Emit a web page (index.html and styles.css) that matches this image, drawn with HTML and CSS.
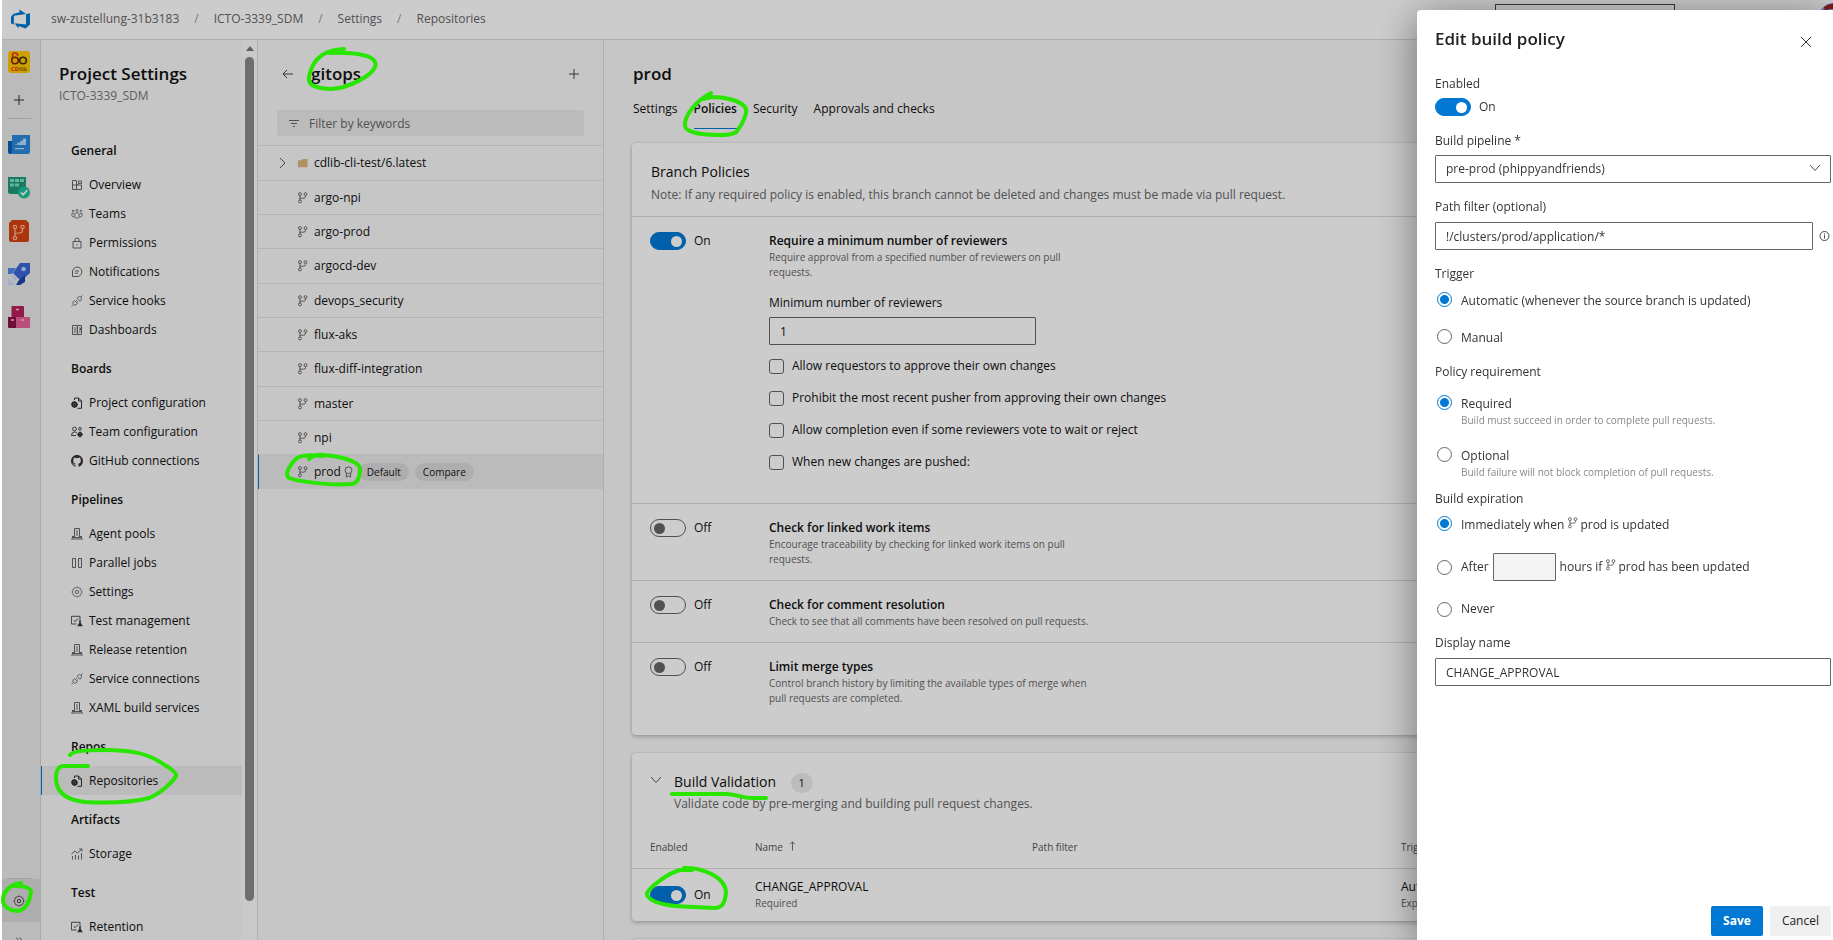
FILE: index.html
```html
<!DOCTYPE html>
<html lang="en">
<head>
<meta charset="utf-8">
<title>Repositories - Settings</title>
<link rel="stylesheet" href="styles.css">
</head>
<body>
<svg class="sprite" aria-hidden="true">
  <symbol id="i-branch" viewBox="0 0 12 14"><g fill="none" stroke="currentColor"><circle cx="3" cy="2.500" r="1.700"/><circle cx="9.500" cy="2.500" r="1.700"/><circle cx="3" cy="11" r="1.700"/><path d="M3 4.200v5.100M9.500 4.200v1q0 2-2 2H3"/></g></symbol>
  <symbol id="i-plus" viewBox="0 0 12 12"><path d="M6 1v10M1 6h10" stroke="currentColor" fill="none"/></symbol>
  <symbol id="i-gear" viewBox="0 0 12 12"><g fill="none" stroke="currentColor" stroke-width=".9"><path d="M9.880 7.610A1.800 1.800 0 0 1 7.610 9.880A1.800 1.800 0 0 1 4.390 9.880A1.800 1.800 0 0 1 2.120 7.610A1.800 1.800 0 0 1 2.120 4.390A1.800 1.800 0 0 1 4.390 2.120A1.800 1.800 0 0 1 7.610 2.120A1.800 1.800 0 0 1 9.880 4.390A1.800 1.800 0 0 1 9.880 7.610z"/><circle cx="6" cy="6" r="1.700"/></g></symbol>
  <symbol id="i-overview" viewBox="0 0 12 12"><path fill="none" stroke="currentColor" d="M1.500 1.500h4v9h-4zM1.500 6h9v4.500h-5M7.500 2h3v2.500h-3zM6 6l1.500-1.500"/></symbol>
  <symbol id="i-teams" viewBox="0 0 14 12"><g fill="none" stroke="currentColor"><circle cx="2.500" cy="2.500" r="1"/><circle cx="7" cy="1.800" r="1.100"/><circle cx="11.500" cy="2.500" r="1"/><path d="M4.500 10V6q0-1.500 2.500-1.500T9.500 6v4q-2.500 2-5 0M4 9.500Q1 9.500 1 7.500V5.500h2.500M10 9.500q3 0 3-2V5.500h-2.500"/></g></symbol>
  <symbol id="i-lock" viewBox="0 0 12 12"><path fill="none" stroke="currentColor" d="M2 4.500h8v6.500H2zM4 4.500V2.500q0-1.500 2-1.500t2 1.500v2M6 7v1.500"/></symbol>
  <symbol id="i-chat" viewBox="0 0 12 12"><path fill="none" stroke="currentColor" d="M1.500 10.500V6A4.700 4.700 0 1 1 6 10.500zM4 5h4M4 7.200h3"/></symbol>
  <symbol id="i-plug" viewBox="0 0 12 12"><path fill="none" stroke="currentColor" stroke-width=".9" d="M.5 11.500l2-2M11.500.5l-1.600 1.600M3.500 5.500l3 3-1.200 1.200q-1.500 1-2.800-.2t-.2-2.800zM6 3.300l3 3 1-1.200q1-1.500-.1-2.900t-2.700 0zM4.500 6.500l1.200-1.200M5.700 7.700l1.200-1.200"/></symbol>
  <symbol id="i-dash" viewBox="0 0 12 12"><path fill="none" stroke="currentColor" d="M1.500 1.500h9v9h-9zM6.500 1.500v9M3 4h2.500M3 6h2.500M3 8h2.500M8 4h1.500v2H8M8 8h1.500"/></symbol>
  <symbol id="i-pageset" viewBox="0 0 12 12"><path fill="none" stroke="currentColor" d="M3.500 3V1h4L10.500 4v7.300H6.500M7.500 1v3h3"/><circle cx="3.500" cy="7.500" r="2.300" fill="none" stroke="currentColor" stroke-width="1.700"/><path stroke="currentColor" d="M3.500 4v7M0 7.500h7M1.200 5l4.600 5M5.800 5l-4.600 5" stroke-width=".8"/></symbol>
  <symbol id="i-teamset" viewBox="0 0 12 12"><g fill="none" stroke="currentColor" stroke-width=".9"><circle cx="3.500" cy="3" r="1.900"/><circle cx="9" cy="2.800" r="1.300"/><path d="M.5 9.500Q.5 6 3.500 6q1.500 0 2.500 1M.5 9.500H5"/></g><circle cx="9" cy="8.500" r="1.700" fill="none" stroke="currentColor" stroke-width="1.500"/><path stroke="currentColor" d="M9 5.500v6M6 8.500h6"/></symbol>
  <symbol id="i-github" viewBox="0 0 16 16"><path fill="currentColor" d="M8 0C3.580 0 0 3.580 0 8c0 3.540 2.290 6.530 5.470 7.590.4.070.55-.17.55-.38 0-.19-.01-.82-.01-1.490-2.010.37-2.530-.49-2.690-.94-.09-.23-.48-.94-.82-1.130-.28-.15-.68-.52-.01-.53.630-.01 1.080.58 1.230.82.720 1.210 1.870.87 2.330.66.070-.52.280-.87.510-1.070-1.780-.2-3.640-.89-3.640-3.950 0-.87.310-1.590.82-2.150-.08-.2-.36-1.020.08-2.120 0 0 .67-.21 2.200.82a7.600 7.600 0 0 1 4 0c1.530-1.040 2.200-.82 2.200-.82.440 1.100.16 1.920.08 2.120.51.560.82 1.270.82 2.150 0 3.070-1.870 3.750-3.650 3.950.29.250.54.730.54 1.480 0 1.070-.01 1.930-.01 2.200 0 .21.150.46.550.38A8 8 0 0 0 16 8c0-4.420-3.580-8-8-8z"/></symbol>
  <symbol id="i-server" viewBox="0 0 12 12"><path fill="none" stroke="currentColor" d="M3.500 9.500v-9h5v9M1.500 8v2.500M10.500 8v2.500M0 11h12M1.500 8.500h2M8.500 8.500h2M5 3h2M5 5h2M5 7h2M2 9.500h8"/></symbol>
  <symbol id="i-parallel" viewBox="0 0 12 12"><path fill="none" stroke="currentColor" d="M1.500 1.500h3v9h-3zM7.500 1.500h3v9h-3z"/></symbol>
  <symbol id="i-test" viewBox="0 0 14 14"><path fill="none" stroke="currentColor" d="M6.500 10.500h-6v-9h10v4M3 6l1.800 1.800L8.300 4"/><path fill="currentColor" d="M9 6h3v.8h-.6v2.400L13.800 13H7.200L9.600 9.200V6.800H9z"/></symbol>
  <symbol id="i-storage" viewBox="0 0 12 12"><path fill="none" stroke="currentColor" d="M1.500 8v3.500M4.500 7v4.500M7.500 7.500v4M10.500 5v6.500M.5 6l3.500-3 2.500 2L11 1M8.300 1H11v2.500"/></symbol>
  <symbol id="i-chevd" viewBox="0 0 12 12"><path fill="none" stroke="currentColor" d="M1 3l5 5.500L11 3"/></symbol>
  <symbol id="i-chevr" viewBox="0 0 12 12"><path fill="none" stroke="currentColor" d="M3.500 1l5 5-5 5"/></symbol>
</svg>

<div class="app">
  <header class="topbar">
    <a class="logo" href="#" aria-label="Azure DevOps"><svg viewBox="0 0 20 20"><path fill="#0078d4" fill-rule="evenodd" d="M20 4.200v11.200l-4.500 4.100-7-2.600v2.500l-4-5.200L16 15.400V5.300zM16 5.100L9.500.5v2.700L3.300 5 1 7.800v6.600l2.900 1.200V6.700z"/></svg></a>
    <nav class="crumbs"><a href="#">sw-zustellung-31b3183</a><i>/</i><a href="#">ICTO-3339_SDM</a><i>/</i><a href="#">Settings</a><i>/</i><a href="#">Repositories</a></nav>
    <input class="search" type="search" aria-label="Search">
    <svg class="avatar" viewBox="0 0 32 32"><circle cx="16" cy="16" r="16" fill="#7fa3e0"/><path d="M6 4Q16-4 29 6V15Q18 1 7 8z" fill="#a32020"/></svg>
  </header>

  <div class="columns">
    <nav class="rail" aria-label="Project">
      <a href="#" aria-label="CDlib"><svg viewBox="0 0 22 22"><rect width="22" height="22" rx="3" fill="#ffc800"/><g fill="none" stroke-width="1.600"><circle cx="7" cy="9.500" r="3.300" stroke="#8a1a10"/><circle cx="15" cy="9.500" r="3.300" stroke="#40300a"/><path d="M4.500 6V4q0-2 2.500-2t2.500 2v1" stroke="#e8321e"/></g><text x="3" y="19.500" class="cdlib">CD<tspan fill="#8a6a00">lib</tspan></text></svg></a>
      <a class="add" href="#" aria-label="Add"><svg class="s12"><use href="#i-plus"/></svg></a>
      <hr>
      <a href="#" aria-label="Overview"><svg viewBox="0 0 22 22"><path fill="#0a5fb8" d="M0 7h5v13H2q-2 0-2-2z"/><path fill="#2b88dd" d="M4 1h18v17q0 2-2 2H2q2 0 2-2z"/><path fill="#b8dcff" d="M7 10.500h2.500V8.500h3V6.500H15V4.500h3v6.500H7zM7 14h9v1.300H7z"/></svg></a>
      <a href="#" aria-label="Boards"><svg viewBox="0 0 22 22"><path fill="#1e9a78" d="M0 0h18v17H2q-2 0-2-2z"/><path fill="#7be3c4" d="M2 2h4v3H2zM7 2h4v3H7zM12 2h4v3h-4zM2 6.500h4v3H2zM7 6.500h4v3H7z"/><circle cx="16" cy="15.500" r="6" fill="#20c09a"/><path d="M13 15.500l2.200 2.200 4-4.400" stroke="#fff" stroke-width="1.700" fill="none"/></svg></a>
      <a href="#" aria-label="Repos"><svg viewBox="0 0 22 22"><path fill="#d8430f" d="M1 3l3-3h14l3 3v17q0 2-2 2H3q-2 0-2-2z"/><g fill="none" stroke="#ffb79a" stroke-width="1.200"><circle cx="7" cy="7" r="1.700"/><circle cx="14.500" cy="7" r="1.700"/><circle cx="7" cy="18" r="1.700"/><path d="M7 9v7M14.500 9v1q0 3-3 3H10q-3 0-3 2"/></g></svg></a>
      <a href="#" aria-label="Pipelines"><svg viewBox="0 0 22 22"><path fill="#3a66d8" d="M12 0h10v10l-9 8-8-8z"/><path fill="#4f86f0" d="M0 5h8l-4 6H0z"/><path fill="#1c44b0" d="M11 17l6-5v7l-5 3h-4z"/><circle cx="15.500" cy="6" r="2.300" fill="#b9d2ff"/><path fill="#c9dcff" d="M0 15l7 7H0zM3 13l5 5 1-3-3-3z"/></svg></a>
      <a href="#" aria-label="Artifacts"><svg viewBox="0 0 22 22"><path fill="#b8215a" d="M3.500 0H15q1 0 1 1v10H3.500z"/><path fill="#8e1244" d="M0 11h9v11H1q-1 0-1-1z"/><path fill="#e8649a" d="M8 11h14v10q0 1-1 1H8z"/><path d="M8 3.500h3M3 14h3M13 14h3" stroke="#ffc9de" stroke-width="1.300"/></svg></a>
      <span class="grow"></span>
      <hr class="tight">
      <a class="current" href="#" aria-label="Project settings"><svg class="s12"><use href="#i-gear"/></svg></a>
      <button class="collapse" aria-label="Expand"><svg viewBox="0 0 12 12"><path fill="none" stroke="currentColor" d="M2 1l4 5-4 5M7 1l4 5-4 5"/></svg></button>
    </nav>

    <aside class="side">
      <div class="side-body">
        <h1>Project Settings</h1>
        <p class="sub">ICTO-3339_SDM</p>
        <section><h2>General</h2><ul>
          <li><a href="#"><svg><use href="#i-overview"/></svg>Overview</a></li>
          <li><a href="#"><svg><use href="#i-teams"/></svg>Teams</a></li>
          <li><a href="#"><svg><use href="#i-lock"/></svg>Permissions</a></li>
          <li><a href="#"><svg><use href="#i-chat"/></svg>Notifications</a></li>
          <li><a href="#"><svg><use href="#i-plug"/></svg>Service hooks</a></li>
          <li><a href="#"><svg><use href="#i-dash"/></svg>Dashboards</a></li></ul></section>
        <section><h2>Boards</h2><ul>
          <li><a href="#"><svg class="dark"><use href="#i-pageset"/></svg>Project configuration</a></li>
          <li><a href="#"><svg class="dark"><use href="#i-teamset"/></svg>Team configuration</a></li>
          <li><a href="#"><svg class="dark"><use href="#i-github"/></svg>GitHub connections</a></li></ul></section>
        <section><h2>Pipelines</h2><ul>
          <li><a href="#"><svg><use href="#i-server"/></svg>Agent pools</a></li>
          <li><a href="#"><svg><use href="#i-parallel"/></svg>Parallel jobs</a></li>
          <li><a href="#"><svg><use href="#i-gear"/></svg>Settings</a></li>
          <li><a href="#"><svg class="dark"><use href="#i-test"/></svg>Test management</a></li>
          <li><a href="#"><svg><use href="#i-server"/></svg>Release retention</a></li>
          <li><a href="#"><svg><use href="#i-plug"/></svg>Service connections</a></li>
          <li><a href="#"><svg><use href="#i-server"/></svg>XAML build services</a></li></ul></section>
        <section><h2>Repos</h2><ul>
          <li><a class="on" href="#"><svg class="dark"><use href="#i-pageset"/></svg>Repositories</a></li></ul></section>
        <section><h2>Artifacts</h2><ul>
          <li><a href="#"><svg><use href="#i-storage"/></svg>Storage</a></li></ul></section>
        <section><h2>Test</h2><ul>
          <li><a href="#"><svg class="dark"><use href="#i-test"/></svg>Retention</a></li></ul></section>
      </div>
      <div class="scroll" aria-hidden="true"><span class="up"></span><span class="thumb"></span></div>
    </aside>

    <section class="branches">
      <div class="b-head">
        <button aria-label="Back"><svg class="s12" viewBox="0 0 12 12"><path fill="none" stroke="currentColor" d="M11 6H1M5 2L1 6l4 4"/></svg></button>
        <h2>gitops</h2>
        <button aria-label="New"><svg class="s12"><use href="#i-plus"/></svg></button>
      </div>
      <label class="filter"><svg viewBox="0 0 12 12"><path fill="none" stroke="currentColor" d="M1 2.500h10M3 5.500h6M5 8.500h2"/></svg><input type="text" placeholder="Filter by keywords" aria-label="Filter by keywords"></label>
      <ul class="b-list">
        <li><a href="#"><svg class="exp"><use href="#i-chevr"/></svg><svg class="folder" viewBox="0 0 12 12"><path fill="#dcb67a" d="M1 3h4l1-1.500h5.500v9H1z"/></svg>cdlib-cli-test/6.latest</a></li>
        <li><a href="#"><svg><use href="#i-branch"/></svg>argo-npi</a></li>
        <li><a href="#"><svg><use href="#i-branch"/></svg>argo-prod</a></li>
        <li><a href="#"><svg><use href="#i-branch"/></svg>argocd-dev</a></li>
        <li><a href="#"><svg><use href="#i-branch"/></svg>devops_security</a></li>
        <li><a href="#"><svg><use href="#i-branch"/></svg>flux-aks</a></li>
        <li><a href="#"><svg><use href="#i-branch"/></svg>flux-diff-integration</a></li>
        <li><a href="#"><svg><use href="#i-branch"/></svg>master</a></li>
        <li><a href="#"><svg><use href="#i-branch"/></svg>npi</a></li>
        <li class="on"><a href="#"><svg><use href="#i-branch"/></svg>prod<svg class="ribbon" viewBox="0 0 12 14"><g fill="none" stroke="currentColor"><circle cx="6" cy="5" r="4"/><path d="M3.500 8.500V13L6 11.500 8.500 13V8.500"/></g></svg></a><span class="pill">Default</span><span class="pill">Compare</span></li>
      </ul>
    </section>

    <main class="content">
      <h2>prod</h2>
      <nav class="tabs"><a href="#">Settings</a><a class="on" href="#">Policies</a><a href="#">Security</a><a href="#">Approvals and checks</a></nav>

      <section class="card">
        <header><h3>Branch Policies</h3><p>Note: If any required policy is enabled, this branch cannot be deleted and changes must be made via pull request.</p></header>
        <div class="policy first">
          <label class="toggle"><input type="checkbox" role="switch" checked>On</label>
          <div>
            <h4>Require a minimum number of reviewers</h4>
            <p>Require approval from a specified number of reviewers on pull requests.</p>
            <label class="min" for="minrev">Minimum number of reviewers</label>
            <input id="minrev" class="box" type="text" value="1">
            <label class="check"><input type="checkbox">Allow requestors to approve their own changes</label>
            <label class="check"><input type="checkbox">Prohibit the most recent pusher from approving their own changes</label>
            <label class="check"><input type="checkbox">Allow completion even if some reviewers vote to wait or reject</label>
            <label class="check"><input type="checkbox">When new changes are pushed:</label>
          </div>
        </div>
        <div class="policy">
          <label class="toggle"><input type="checkbox" role="switch">Off</label>
          <div><h4>Check for linked work items</h4><p>Encourage traceability by checking for linked work items on pull requests.</p></div>
        </div>
        <div class="policy">
          <label class="toggle"><input type="checkbox" role="switch">Off</label>
          <div><h4>Check for comment resolution</h4><p>Check to see that all comments have been resolved on pull requests.</p></div>
        </div>
        <div class="policy last">
          <label class="toggle"><input type="checkbox" role="switch">Off</label>
          <div><h4>Limit merge types</h4><p>Control branch history by limiting the available types of merge when pull requests are completed.</p></div>
        </div>
      </section>

      <section class="card">
        <div class="bv-head">
          <button aria-label="Collapse"><svg><use href="#i-chevd"/></svg></button>
          <div><h3>Build Validation <span class="count">1</span></h3><p>Validate code by pre-merging and building pull request changes.</p></div>
        </div>
        <table>
          <thead><tr><th class="c1">Enabled</th><th class="c2">Name <svg viewBox="0 0 10 12"><path fill="none" stroke="currentColor" d="M5 11.500V1M2 4l3-3 3 3"/></svg></th><th class="c3">Path filter</th><th>Trigger</th></tr></thead>
          <tbody><tr><td><label class="toggle"><input type="checkbox" role="switch" checked>On</label></td><td><b>CHANGE_APPROVAL</b><small>Required</small></td><td></td><td><b>Automatic</b><small>Expires immediately</small></td></tr></tbody>
        </table>
      </section>
      <section class="card stub"></section>
    </main>
  </div>
</div>

<div class="scrim"></div>

<form class="panel" role="dialog" aria-label="Edit build policy">
  <div class="p-head"><h2>Edit build policy</h2><button type="button" aria-label="Close"><svg class="s12" viewBox="0 0 12 12"><path fill="none" stroke="currentColor" d="M1 1l10 10M11 1L1 11"/></svg></button></div>
  <label class="lab" for="enabled">Enabled</label>
  <label class="toggle"><input id="enabled" type="checkbox" role="switch" checked>On</label>
  <label class="lab gap" for="pipe">Build pipeline *</label>
  <div class="select"><select id="pipe" class="box"><option>pre-prod (phippyandfriends)</option></select><svg><use href="#i-chevd"/></svg></div>
  <label class="lab gap2" for="path">Path filter (optional)</label>
  <div class="row"><input id="path" class="box" type="text" value="!/clusters/prod/application/*"><svg viewBox="0 0 12 12"><g fill="none" stroke="currentColor" stroke-width=".9"><circle cx="6" cy="6" r="4.500"/><path d="M6 5.200v3.300M6 3.300v1.100"/></g></svg></div>
  <fieldset class="trigger"><legend>Trigger</legend>
    <label class="radio"><input type="radio" name="t" checked>Automatic (whenever the source branch is updated)</label>
    <label class="radio"><input type="radio" name="t">Manual</label>
  </fieldset>
  <fieldset class="require"><legend>Policy requirement</legend>
    <label class="radio"><input type="radio" name="r" checked><span>Required<small>Build must succeed in order to complete pull requests.</small></span></label>
    <label class="radio"><input type="radio" name="r"><span>Optional<small>Build failure will not block completion of pull requests.</small></span></label>
  </fieldset>
  <fieldset class="expire"><legend>Build expiration</legend>
    <label class="radio"><input type="radio" name="e" checked><span>Immediately when <svg><use href="#i-branch"/></svg>prod is updated</span></label>
    <div class="radio"><input id="after" type="radio" name="e"><label for="after">After</label><input class="box hours" type="text" disabled aria-label="Hours"><span>hours if <svg><use href="#i-branch"/></svg>prod has been updated</span></div>
    <label class="radio"><input type="radio" name="e">Never</label>
  </fieldset>
  <label class="lab gap3" for="dn">Display name</label>
  <input id="dn" class="box" type="text" value="CHANGE_APPROVAL">
  <div class="actions"><button class="primary" type="button">Save</button><button type="button">Cancel</button></div>
</form>

<svg class="ink" aria-hidden="true">
  <path d="M344 49C328 50 313 55 309 77C308 84 312 88 331 89C350 88 372 75 375 67C380 54 350 52 329 53"/>
  <path d="M309 459Q315 454 323 455C340 456 358 461 360 468C360 476 358 483 352 484C330 486 296 481 289 478C284 474 290 464 297 458Q304 454 323 456"/>
  <path d="M70 755C72 751 88 750 105 750C130 750 146 753 160 762C170 768 177 773 176 776C174 780 162 793 149 798C130 803 105 803 85 802C66 800 57 792 56 780C56 772 57 766 64 766H88"/>
  <path d="M21 883C12 884 3 890 3 900C3 908 12 911 18 911C25 910 30 902 31 892C31 887 24 886 15 886"/>
  <path d="M711 93C697 100 684 115 685 126C686 132 700 135 719 135Q735 135 737 131C743 124 747 113 746 109C742 99 720 97 712 97L703 99"/>
  <path d="M672 794H726C740 795 742 798 752 798H766"/>
  <path d="M684 868C700 867 726 876 726 893C725 902 723 908 714 908C695 907 679 907 668 905C655 903 646 898 647 893C650 887 668 873 680 870L692 870"/>
</svg>
</body>
</html>
```

FILE: styles.css
```css
* { box-sizing: border-box; }
body { margin: 0; background: #fff; color: #111; font: 12px/16px "Open Sans", "Noto Sans", sans-serif; }
h1, h2, h3, h4, p, ul, fieldset, hr { margin: 0; padding: 0; border: 0; }
ul { list-style: none; }
a { color: inherit; text-decoration: none; }
button { border: 0; background: none; padding: 0; color: inherit; font: inherit; cursor: pointer; display: flex; align-items: center; justify-content: center; }
input, select { font: inherit; color: inherit; margin: 0; }
svg { width: 12px; height: 12px; flex: none; }
.sprite { position: absolute; width: 0; height: 0; }
h1, h2 { font-size: 17px; line-height: 24px; font-weight: 600; }

.app { height: 100vh; margin-left: 2px; display: flex; flex-direction: column; overflow: hidden; background: #f8f8f8; }
.scrim { position: fixed; inset: 0 0 0 2px; background: rgba(0, 0, 0, .2); }

.topbar { display: flex; align-items: center; height: 40px; padding: 0 0 2px 8px; background: #fff; border-bottom: 1px solid #dcdcdc; flex: none; }
.logo { display: flex; margin-right: 21px; }
.logo svg { width: 20px; height: 20px; }
.crumbs { display: flex; gap: 15px; color: #666; flex: 1; }
.crumbs i { font-style: normal; color: #999; }
.search { width: 180px; height: 30px; border: 1px solid #444; background: #fff; margin-right: 143px; }
.avatar { width: 32px; height: 32px; margin-right: -17px; }

.columns { display: flex; flex: 1; min-height: 0; }

.rail { display: flex; flex-direction: column; width: 39px; background: #eaeaea; border-right: 1px solid #d4d4d4; flex: none; }
.rail a { height: 43px; display: flex; align-items: center; justify-content: center; padding-right: 4px; flex: none; }
.rail a svg { width: 22px; height: 22px; }
.rail a svg.s12 { width: 12px; height: 12px; color: #333; }
.rail .add { height: 33px; }
.rail hr { height: 1px; background: #cacaca; margin: 2px 9px 4px 5px; flex: none; }
.rail hr.tight { margin-top: 0; margin-bottom: 0; }
.rail .current { background: #dadada; }
.grow { flex: 1; }
.cdlib { font: 700 6px "Open Sans", sans-serif; fill: #e03010; }
.collapse { height: 18px; overflow: hidden; align-items: flex-start; padding: 15px 4px 0 0; flex: none; }
.collapse svg { width: 8px; height: 8px; }

.side { display: flex; width: 217px; border-right: 1px solid #dcdcdc; flex: none; overflow: hidden; }
.side-body { flex: 1; padding-top: 22px; }
.side h1, .side .sub { padding-left: 18px; }
.side .sub { color: #777; padding-top: 2px; margin-bottom: 27px; }
.side section { margin-bottom: 5px; }
.side h2 { font-size: 12px; line-height: 39px; padding-left: 30px; }
.side li a { display: flex; align-items: center; gap: 6px; height: 29px; padding-left: 30px; }
.side li svg { color: #666; }
.side li svg.dark { color: #333; }
.side li .on { background: #eaeaea; border-left: 1px solid #0078d4; padding-left: 29px; }
.scroll { width: 15px; background: #fcfcfc; display: flex; flex-direction: column; align-items: center; padding: 6px 0 39px; }
.up { border: 4px solid transparent; border-top: 0; border-bottom: 5px solid #777; margin-bottom: 6px; }
.thumb { width: 9px; flex: 1; border-radius: 5px; background: #8a8a8a; }

.branches { width: 346px; border-right: 1px solid #dcdcdc; flex: none; }
.b-head { display: flex; align-items: center; padding: 22px 23px 0 24px; height: 46px; }
.b-head h2 { flex: 1; padding-left: 17px; }
.b-head svg { color: #444; }
.filter { display: flex; align-items: center; gap: 9px; height: 26px; margin: 24px 19px 9px; padding: 1px 0 0 11px; background: #eaeaea; border-radius: 2px; color: #666; }
.filter input { border: 0; background: none; padding: 0; flex: 1; outline: 0; }
.filter input::placeholder { color: #666; opacity: 1; }
.b-list li { display: flex; align-items: center; height: 34px; border-top: 1px solid #e2e2e2; padding-left: 39px; }
.b-list li:nth-child(3n+1) { height: 35px; }
.b-list a { display: flex; align-items: center; gap: 6px; }
.b-list svg { width: 11px; height: 12px; color: #555; }
.b-list .exp { margin: 0 2px 0 -21px; width: 13px; }
.b-list .ribbon { margin: 0 5px 0 -4px; }
.b-list .on { background: #eaeaea; border-top-color: #eaeaea; border-left: 1px solid #0078d4; padding-left: 38px; }
.pill { font-size: 10px; line-height: 18px; border-radius: 9px; background: #dadada; padding: 0 8px; margin-right: 6px; }

.content { flex: 1; min-width: 0; padding: 22px 28px 0; overflow: hidden; display: flex; flex-direction: column; }
.content > * { flex: none; }
.content > h2, .tabs { padding-left: 1px; }
.tabs { display: flex; gap: 16px; margin: 14px 0 14px; height: 29px; }
.tabs a { height: 29px; line-height: 18px; }
.tabs .on { font-weight: 600; border-bottom: 1px solid #0078d4; }
.card { background: #fff; border-radius: 4px; box-shadow: 0 2px 4px rgba(0, 0, 0, .2), 0 0 2px rgba(0, 0, 0, .15); margin-bottom: 18px; }
.card > header { padding: 19px 19px 12px; }
.card h3 { font-size: 14px; line-height: 20px; font-weight: 400; }
.card header p, .bv-head p { color: #666; line-height: 18px; margin-top: 4px; }
.policy { display: flex; border-top: 1px solid #dcdcdc; padding: 15px 18px 13px; align-items: flex-start; }
.policy .toggle { width: 119px; flex: none; }
.policy h4 { font-size: 12px; line-height: 18px; font-weight: 600; }
.policy p { font-size: 10px; line-height: 15px; color: #666; width: 330px; }
.policy .min { display: block; margin: 14px 0 5px; line-height: 18px; }
.policy.last { padding-bottom: 29px; }
.policy.first { padding-bottom: 25px; }
.policy .box { width: 267px; margin-bottom: 5px; }
.check { display: flex; align-items: center; gap: 8px; height: 32px; }
.check input { appearance: none; width: 15px; height: 15px; border: 1px solid #666; border-radius: 3px; }
.toggle { display: flex; align-items: center; gap: 8px; height: 18px; }
.toggle input { appearance: none; width: 36px; height: 18px; border: 1px solid #666; border-radius: 9px; display: flex; align-items: center; padding: 0 3px; }
.toggle input::before { content: ""; width: 11px; height: 11px; border-radius: 50%; background: #666; }
.toggle input:checked { background: #0078d4; border-color: #0078d4; justify-content: flex-end; }
.toggle input:checked::before { background: #fff; }
.box { display: block; height: 28px; width: 100%; border: 1px solid #666; border-radius: 1px; padding: 0 10px; background: #fff; }

.bv-head { display: flex; gap: 12px; padding: 19px 18px 14px; align-items: flex-start; }
.bv-head button { height: 16px; color: #555; }
.bv-head p { margin-top: 2px; }
.count { display: inline-block; margin-left: 11px; width: 22px; border-radius: 10px; background: #ececec; font-size: 11px; text-align: center; }
table { width: 100%; border-collapse: collapse; table-layout: fixed; }
th { font-size: 10px; font-weight: 400; text-align: left; color: #555; height: 41px; padding: 0; }
th svg { width: 9px; height: 10px; margin-left: 2px; }
td { border-top: 1px solid #dcdcdc; height: 53px; padding: 1px 0 0; vertical-align: middle; }
th:first-child, td:first-child { padding-left: 18px; }
.c1 { width: 123px; }
.c2 { width: 277px; }
.c3 { width: 369px; }
td b, td small { display: block; line-height: 17px; }
td b { font-weight: 400; }
td small { font-size: 10px; color: #666; }
.stub { height: 60px; }

.panel { position: fixed; top: 10px; right: 0; bottom: 0; width: 416px; padding: 17px 2px 4px 18px; background: #fff; border-radius: 4px 0 0 0; box-shadow: 0 6px 40px rgba(0, 0, 0, .45); display: flex; flex-direction: column; align-items: stretch; color: #333; }
.p-head { display: flex; justify-content: space-between; padding-right: 19px; margin-bottom: 24px; }
.p-head h2 { color: #222; }
.p-head button { padding-top: 6px; }
.lab, legend { line-height: 18px; padding: 0; display: block; }
.panel > .toggle { margin-top: 5px; align-self: flex-start; }
.gap { margin: 16px 0 5px; }
.gap2 { margin: 15px 0 6px; }
.gap3 { margin: 4px 0 6px; }
.select { position: relative; }
.select select { appearance: none; }
.select svg { position: absolute; right: 10px; top: 7px; color: #444; pointer-events: none; }
.row { display: flex; align-items: center; gap: 5px; }
.row svg { width: 13px; }
fieldset { min-width: 0; }
.trigger { margin-top: 15px; }
.radio { display: flex; align-items: flex-start; gap: 9px; padding-left: 2px; line-height: 18px; min-height: 36px; }
.radio input[type=radio] { appearance: none; width: 15px; height: 15px; border: 1px solid #666; border-radius: 50%; flex: none; }
.radio input[type=radio]:checked { border-color: #0078d4; background: radial-gradient(circle, #0078d4 4px, #fff 5px); }
.radio small { display: block; font-size: 10px; line-height: 14px; color: #888; }
.radio svg { width: 11px; height: 12px; margin-right: 2px; vertical-align: 0; color: #555; }
.trigger .radio { padding-top: 9px; height: 37px; }
.require { margin-top: 6px; }
.require .radio { padding-top: 14px; height: 52px; }
.expire { margin-top: 5px; }
.expire .radio { padding-top: 8px; height: 38px; }
.expire div.radio, .expire .radio:last-child { padding: 0 0 0 2px; height: 42px; align-items: center; }
.expire div.radio { gap: 4px; }
.expire div.radio label { padding-left: 5px; }
.radio .hours { width: 63px; background: #f3f3f3; }
.actions { display: flex; gap: 7px; justify-content: flex-end; margin-top: auto; }
.actions button { height: 30px; padding: 0 12px; background: #efefef; border-radius: 2px; color: #222; }
.actions .primary { background: #0078d4; color: #fff; font-weight: 700; }

.ink { position: fixed; inset: 0; width: 100%; height: 100%; pointer-events: none; fill: none; stroke: #28e600; stroke-width: 4px; stroke-linecap: round; stroke-linejoin: round; }
```
